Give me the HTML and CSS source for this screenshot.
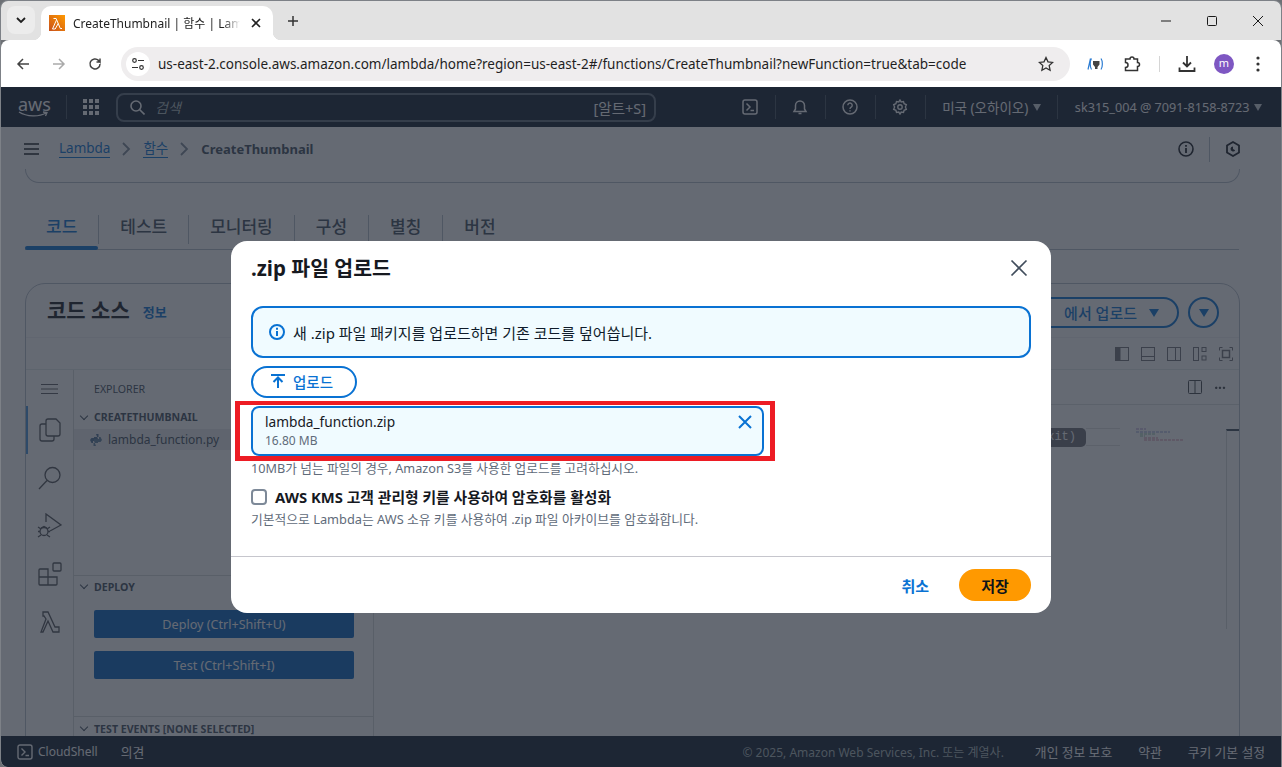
FILE: index.html
```html
<!DOCTYPE html>
<html lang="ko">
<head>
  <meta charset="UTF-8" />
  <meta name="viewport" content="width=device-width, initial-scale=1.0" />
  <title>CreateThumbnail | 함수 | Lambda</title>
  <link rel="stylesheet" href="styles.css">
</head>
<body>
  <div class="window">
    <!-- browser tabs -->
    <div class="tabstrip">
      <div class="tab-search">
        <svg width="12" height="12" viewBox="0 0 12 12"><path d="M2 4l4 4 4-4" fill="none" stroke="#1f1f1f" stroke-width="1.8"/></svg>
      </div>
      <div class="tab">
        <div class="favicon">
          <svg width="16" height="16" viewBox="0 0 16 16"><path d="M4.5 2.5h2.6l4.2 10h1.7M9.2 7.5l-3 5.500H3.500l3.900-8.800" fill="none" stroke="#fff" stroke-width="1"/></svg>
        </div>
        <span class="tab-title">CreateThumbnail | 함수 | Lambda</span>
        <svg class="tab-close" width="10" height="10" viewBox="0 0 10 10"><path d="M1 1l8 8M9 1l-8 8" stroke="#222" stroke-width="1.6"/></svg>
      </div>
      <svg class="new-tab" width="12" height="12" viewBox="0 0 12 12"><path d="M6 1v10M1 6h10" stroke="#333" stroke-width="1.5"/></svg>
      <div class="win-controls">
        <svg width="12" height="12" viewBox="0 0 12 12"><path d="M1 6h10" stroke="#1a1a1a"/></svg>
        <svg width="12" height="12" viewBox="0 0 12 12"><rect x="1.500" y="1.500" width="9" height="9" rx="1" fill="none" stroke="#1a1a1a"/></svg>
        <svg width="12" height="12" viewBox="0 0 12 12"><path d="M1 1l10 10M11 1L1 11" stroke="#1a1a1a"/></svg>
      </div>
    </div>

    <!-- address bar -->
    <div class="toolbar">
      <svg class="tool" width="16" height="16" viewBox="0 0 16 16"><path d="M14 8H3M8 3L3 8l5 5" fill="none" stroke="#444" stroke-width="1.500"/></svg>
      <svg class="tool" width="16" height="16" viewBox="0 0 16 16"><path d="M2 8h11M8 3l5 5-5 5" fill="none" stroke="#aaa" stroke-width="1.500"/></svg>
      <svg class="tool" width="16" height="16" viewBox="0 0 16 16"><path d="M13 8a5 5 0 1 1-1.500-3.600L13 6V2.500M13 6H9.500" fill="none" stroke="#444" stroke-width="1.500"/></svg>
      <div class="omnibox">
        <div class="site-info">
          <svg width="14" height="14" viewBox="0 0 14 14"><g fill="none" stroke="#333" stroke-width="1.200"><circle cx="3.500" cy="3.500" r="1.800"/><path d="M7 3.500h6M1 10.500h6"/><circle cx="10.500" cy="10.500" r="1.800"/></g></svg>
        </div>
        <span class="url">us-east-2.console.aws.amazon.com/lambda/home?region=us-east-2#/functions/CreateThumbnail?newFunction=true&amp;tab=code</span>
        <svg width="16" height="16" viewBox="0 0 16 16"><path d="M8 1.500l2 4.300 4.700.6-3.500 3.200.9 4.700L8 12l-4.100 2.300.9-4.700L1.300 6.400 6 5.800z" fill="none" stroke="#333" stroke-width="1.300"/></svg>
      </div>
      <div class="ext-icons">
        <svg width="18" height="14" viewBox="0 0 18 14"><path d="M3.500 1.500L1 12.500M4.500 1.500C2.800 4 2.800 10 4.500 12.500M14 1.500c1.800 2.500 1.800 8.500 0 11" fill="none" stroke="#2b7cd3" stroke-width="1.200"/><path d="M6 4h6.500v3.500l-2 2.500v2H8v-2l-2-2.500z" fill="#444"/></svg>
        <svg width="18" height="18" viewBox="0 0 18 18"><path d="M2.500 4H7a2 2 0 0 1 4 0h3.500v3.500a2 2 0 0 1 0 4V15.500h-12v-3a2.500 2.500 0 0 0 0-5z" fill="none" stroke="#333" stroke-width="1.500"/></svg>
        <i class="ext-sep"></i>
        <svg width="18" height="18" viewBox="0 0 18 18"><path d="M9 1v10M5 7.500l4 4 4-4M1.500 12.500v3.500h15v-3.500" fill="none" stroke="#333" stroke-width="1.800"/></svg>
        <span class="avatar">m</span>
        <svg class="more" width="4" height="16" viewBox="0 0 4 16"><circle cx="2" cy="2" r="1.600" fill="#333"/><circle cx="2" cy="8" r="1.600" fill="#333"/><circle cx="2" cy="14" r="1.600" fill="#333"/></svg>
      </div>
    </div>

    <div class="console">
      <!-- aws top nav -->
      <header class="topnav">
        <div class="aws-logo">
          <span>aws</span>
          <svg width="31" height="7" viewBox="0 0 31 7"><path d="M1 1c8 5 20 5 27 1M25 1l4 .5-1.500 3.500" fill="none" stroke="#fff" stroke-width="1.300"/></svg>
        </div>
        <i class="nav-sep"></i>
        <svg class="grid-icon" width="16" height="16" viewBox="0 0 16 16" fill="#fff"><rect width="4" height="4"/><rect x="6" width="4" height="4"/><rect x="12" width="4" height="4"/><rect y="6" width="4" height="4"/><rect x="6" y="6" width="4" height="4"/><rect x="12" y="6" width="4" height="4"/><rect y="12" width="4" height="4"/><rect x="6" y="12" width="4" height="4"/><rect x="12" y="12" width="4" height="4"/></svg>
        <div class="search">
          <svg width="15" height="15" viewBox="0 0 15 15"><circle cx="6" cy="6" r="5" fill="none" stroke="#fff" stroke-width="1.600"/><path d="M9.500 9.500L14.500 14.500" stroke="#fff" stroke-width="1.600"/></svg>
          <em>검색</em>
          <span class="shortcut">[알트+S]</span>
        </div>
        <div class="nav-right">
          <svg width="16" height="16" viewBox="0 0 16 16"><rect x="1" y="1" width="14" height="14" rx="2" fill="none" stroke="#fff" stroke-width="1.500"/><path d="M4.500 4.500L8 8l-3.500 3.500M8.500 11.500H12" fill="none" stroke="#fff" stroke-width="1.500"/></svg>
          <i class="nav-sep"></i>
          <svg width="16" height="16" viewBox="0 0 16 16"><path d="M2 12.500h12l-1.500-2.500V6.500a4.500 4.500 0 0 0-9 0V10zM6.500 14.500h3" fill="none" stroke="#fff" stroke-width="1.500"/></svg>
          <i class="nav-sep"></i>
          <svg width="16" height="16" viewBox="0 0 16 16"><circle cx="8" cy="8" r="7" fill="none" stroke="#fff" stroke-width="1.500"/><path d="M5.800 6.200a2.200 2.200 0 1 1 3.400 1.900c-.8.500-1.200 1-1.200 1.900M8 11.200v1.300" fill="none" stroke="#fff" stroke-width="1.400"/></svg>
          <i class="nav-sep"></i>
          <svg width="16" height="16" viewBox="0 0 16 16"><path d="M8 1l1.200 1.900 2.300-.4.600 2.200 2.200 1L13.400 8l.9 2.300-2.200 1-.6 2.200-2.300-.4L8 15l-1.200-1.900-2.300.4-.6-2.200-2.200-1L2.600 8l-.9-2.300 2.200-1 .6-2.200 2.300.4z" fill="none" stroke="#fff" stroke-width="1.400"/><circle cx="8" cy="8" r="2.200" fill="none" stroke="#fff" stroke-width="1.400"/></svg>
          <i class="nav-sep"></i>
          <span class="nav-menu region">미국 (오하이오)</span>
          <i class="caret"></i>
          <i class="nav-sep"></i>
          <span class="nav-menu account">sk315_004 @ 7091-8158-8723</span>
          <i class="caret"></i>
        </div>
      </header>

      <!-- breadcrumb -->
      <div class="crumbs">
        <svg class="burger" width="15" height="12" viewBox="0 0 15 12"><path d="M0 1h15M0 6h15M0 11h15" stroke="#16191f" stroke-width="1.700"/></svg>
        <a class="link">Lambda</a>
        <svg width="9" height="14" viewBox="0 0 9 14"><path d="M1 1l6 6-6 6" fill="none" stroke="#7d8998" stroke-width="1.800"/></svg>
        <a class="link">함수</a>
        <svg width="9" height="14" viewBox="0 0 9 14"><path d="M1 1l6 6-6 6" fill="none" stroke="#7d8998" stroke-width="1.800"/></svg>
        <strong>CreateThumbnail</strong>
        <div class="crumb-right">
          <svg width="16" height="16" viewBox="0 0 16 16"><circle cx="8" cy="8" r="7" fill="none" stroke="#16191f" stroke-width="1.600"/><path d="M8 7v5M8 4v1.800" stroke="#16191f" stroke-width="1.800"/></svg>
          <i class="crumb-sep"></i>
          <svg width="16" height="16" viewBox="0 0 16 16"><path d="M8 1l6 3.500v7L8 15l-6-3.500v-7z" fill="none" stroke="#16191f" stroke-width="1.800"/><path d="M8 5.500a2.500 2.500 0 1 0 2.200 3.700L8 8z" fill="#16191f"/></svg>
        </div>
      </div>

      <main class="content">
        <div class="prev-card"></div>

        <nav class="tabs">
          <span class="page-tab active">코드</span>
          <span class="page-tab">테스트</span>
          <span class="page-tab">모니터링</span>
          <span class="page-tab">구성</span>
          <span class="page-tab">별칭</span>
          <span class="page-tab">버전</span>
        </nav>

        <section class="source-card">
          <div class="card-head">
            <h2>코드 소스</h2>
            <a class="info-link">정보</a>
            <div class="card-actions">
              <span class="pill-btn">에서 업로드 <i class="caret blue"></i></span>
              <span class="round-btn"><i class="caret blue"></i></span>
            </div>
          </div>

          <div class="ide-toolbar">
            <svg width="14" height="14" viewBox="0 0 14 14"><rect x=".5" y=".5" width="13" height="13" fill="none" stroke="#16191f"/><rect x=".5" y=".5" width="5" height="13" fill="#16191f"/></svg>
            <svg width="14" height="14" viewBox="0 0 14 14"><rect x=".5" y=".5" width="13" height="13" fill="none" stroke="#16191f"/><path d="M0 9.500h14" stroke="#16191f"/></svg>
            <svg width="14" height="14" viewBox="0 0 14 14"><rect x=".5" y=".5" width="13" height="13" fill="none" stroke="#16191f"/><path d="M8.500 0v14" stroke="#16191f"/></svg>
            <svg width="14" height="14" viewBox="0 0 14 14" fill="none" stroke="#16191f"><rect x=".5" y=".5" width="5" height="13"/><rect x="9" y=".5" width="4" height="4"/><rect x="9" y="9" width="4" height="4"/></svg>
            <svg width="14" height="14" viewBox="0 0 14 14" fill="none" stroke="#16191f"><rect x="3.500" y="3.500" width="7" height="7" stroke-width="1.500"/><path d="M.5 3.500v-3h3M10.500.5h3v3M13.500 10.500v3h-3M3.500 13.500h-3v-3"/></svg>
          </div>

          <div class="ide">
            <div class="activity">
              <svg class="ide-burger" width="17" height="10" viewBox="0 0 17 10"><path d="M0 .5h17M0 5h17M0 9.500h17" stroke="#16191f"/></svg>
              <div class="act-item active">
                <svg width="22" height="24" viewBox="0 0 22 24" fill="none" stroke="#16191f" stroke-width="1.300"><path d="M9 1h8l4 4v11a2 2 0 0 1-2 2H9a2 2 0 0 1-2-2V3a2 2 0 0 1 2-2z"/><path d="M7 6H3a2 2 0 0 0-2 2v13a2 2 0 0 0 2 2h10a2 2 0 0 0 2-2v-3"/></svg>
              </div>
              <div class="act-item">
                <svg width="24" height="24" viewBox="0 0 24 24" fill="none" stroke="#16191f" stroke-width="1.300"><circle cx="14.500" cy="9" r="7.500"/><path d="M9 14.500L1 23"/></svg>
              </div>
              <div class="act-item">
                <svg width="26" height="26" viewBox="0 0 26 26" fill="none" stroke="#16191f" stroke-width="1.300"><path d="M9 9V1l15 11-11 6"/><circle cx="7" cy="18.500" r="4"/><path d="M4 15l3-1.500 3 1.500M1 14l3 2M1 18.500h2M1 24l3-2M13 14l-3 2M13 18.500h-2M13 24l-3-2"/></svg>
              </div>
              <div class="act-item">
                <svg width="24" height="24" viewBox="0 0 24 24" fill="none" stroke="#16191f" stroke-width="1.300"><path d="M1 8a1 1 0 0 1 1-1h8v16H2a1 1 0 0 1-1-1zM1 15h18M10 15h9v7a1 1 0 0 1-1 1h-8"/><rect x="15" y="1" width="8" height="8" rx="1"/></svg>
              </div>
              <div class="act-item">
                <svg width="20" height="22" viewBox="0 0 20 22" fill="none" stroke="#16191f" stroke-width="1.300"><path d="M3 1h5l7 15h4v5h-6L8 10l-5 11H1l5-13-2-3H3z"/></svg>
              </div>
            </div>

            <div class="sidebar">
              <div class="side-title">EXPLORER</div>
              <div class="tree-head"><i class="chev"></i>CREATETHUMBNAIL</div>
              <div class="tree-file">
                <svg width="12" height="12" viewBox="0 0 12 12"><path d="M6 0h2.500v3H4v1H1.500L0 6l1.500 3H3V7h5V5" fill="#4d6f95"/><path d="M6 12H3.500V9H8V8h2.500L12 6l-1.500-3H9v2H4v2" fill="#5e7f9f"/></svg>
                lambda_function.py
              </div>
              <div class="side-spacer"></div>
              <div class="panel-head deploy"><i class="chev"></i>DEPLOY</div>
              <div class="side-btns">
                <button type="button">Deploy (Ctrl+Shift+U)</button>
                <button type="button">Test (Ctrl+Shift+I)</button>
              </div>
              <div class="panel-head"><i class="chev"></i>TEST EVENTS [NONE SELECTED]</div>
            </div>

            <div class="editor">
              <div class="editor-tabs">
                <svg width="14" height="14" viewBox="0 0 14 14" fill="none" stroke="#16191f"><rect x=".5" y=".5" width="13" height="13" rx="1"/><path d="M7 0v14"/></svg>
                <span class="dots">···</span>
              </div>
              <div class="editor-body">
                <span class="hint-pill">(Ctrl+Q to exit)</span>
                <span class="hint-line"></span>
                <svg class="minimap" width="50" height="14" viewBox="0 0 50 14" fill="none" stroke-width=".6" stroke-dasharray="3 1"><path d="M1 1h10" stroke="#7a4fb0"/><path d="M1 4h34" stroke="#4a5fc0"/><path d="M5 6h16M5 8h5" stroke="#3f9a6a"/><path d="M9 10h14M9 12h40" stroke="#c04070"/></svg>
                <span class="scroll-mark"></span>
              </div>
            </div>
          </div>
        </section>
      </main>

      <footer class="foot">
        <svg width="16" height="16" viewBox="0 0 16 16"><rect x="1" y="1" width="14" height="14" rx="2" fill="none" stroke="#fff" stroke-width="1.400"/><path d="M4.500 4.500L8 8l-3.500 3.500M8.500 11.500H12" fill="none" stroke="#fff" stroke-width="1.400"/></svg>
        <span class="foot-shell">CloudShell</span>
        <span class="foot-link">의견</span>
        <div class="foot-right">
          <span class="copy">© 2025, Amazon Web Services, Inc. 또는 계열사.</span>
          <span class="foot-link">개인 정보 보호</span>
          <span class="foot-link">약관</span>
          <span class="foot-link">쿠키 기본 설정</span>
        </div>
      </footer>

      <!-- upload dialog -->
      <div class="overlay">
        <div class="modal">
          <div class="modal-head">
            <h1>.zip 파일 업로드</h1>
            <svg width="18" height="18" viewBox="0 0 18 18"><path d="M1.500 1.500l15 15M16.500 1.500l-15 15" stroke="#414d5c" stroke-width="1.700"/></svg>
          </div>
          <div class="modal-body">
            <div class="alert">
              <svg width="16" height="16" viewBox="0 0 16 16"><circle cx="8" cy="8" r="7" fill="none" stroke="#0972d3" stroke-width="2"/><path d="M8 7v5M8 3.800v2" stroke="#0972d3" stroke-width="2"/></svg>
              <span>새 .zip 파일 패키지를 업로드하면 기존 코드를 덮어씁니다.</span>
            </div>
            <button type="button" class="upload-btn">
              <svg width="16" height="16" viewBox="0 0 16 16"><path d="M1 2h14M8 15V5M3.500 9L8 4.500 12.500 9" fill="none" stroke="#0972d3" stroke-width="2"/></svg>
              업로드
            </button>
            <div class="file-token">
              <div>
                <div class="file-name">lambda_function.zip</div>
                <div class="file-size">16.80 MB</div>
              </div>
              <svg width="14" height="14" viewBox="0 0 14 14"><path d="M1 1l12 12M13 1L1 13" stroke="#0972d3" stroke-width="2"/></svg>
              <div class="highlight"></div>
            </div>
            <p class="hint">10MB가 넘는 파일의 경우, Amazon S3를 사용한 업로드를 고려하십시오.</p>
            <label class="check">
              <span class="box"></span>
              AWS KMS 고객 관리형 키를 사용하여 암호화를 활성화
            </label>
            <p class="check-note">기본적으로 Lambda는 AWS 소유 키를 사용하여 .zip 파일 아카이브를 암호화합니다.</p>
          </div>
          <div class="modal-foot">
            <a class="cancel">취소</a>
            <button type="button" class="save">저장</button>
          </div>
        </div>
      </div>
    </div>
  </div>
</body>
</html>
```

FILE: styles.css
```css
* {
  box-sizing: border-box;
}

body {
  margin: 0;
  background: #6d7075;
  font-family: 'Noto Sans', 'Noto Sans CJK KR', sans-serif;
  color: #16191f;
}

.window {
  width: 1282px;
  height: 767px;
  display: flex;
  flex-direction: column;
  overflow: hidden;
  border: 1px solid #7d8187;
  border-bottom: none;
  border-radius: 8px 8px 0 8px;
}

/* browser chrome */
.tabstrip {
  height: 39px;
  flex: none;
  display: flex;
  align-items: flex-end;
  background: #e2e2e2;
  padding-left: 6px;
}

.tab-search {
  width: 28px;
  height: 28px;
  margin-bottom: 6px;
  border-radius: 8px;
  background: #ececec;
  display: flex;
  align-items: center;
  justify-content: center;
}

.tab {
  position: relative;
  width: 232px;
  height: 34px;
  margin-left: 6px;
  padding: 0 9px 0 8px;
  display: flex;
  align-items: center;
  gap: 8px;
  background: #fff;
  border-radius: 10px 10px 0 0;
}

.tab::before,
.tab::after {
  content: "";
  position: absolute;
  bottom: 0;
  width: 8px;
  height: 8px;
}

.tab::before {
  left: -8px;
  background: radial-gradient(circle at 0 0, transparent 8px, #fff 8.5px);
}

.tab::after {
  right: -8px;
  background: radial-gradient(circle at 100% 0, transparent 8px, #fff 8.5px);
}

.favicon {
  width: 16px;
  height: 16px;
  flex: none;
  background: linear-gradient(45deg, #c8511b, #ff9900);
}

.tab-title {
  width: 167px;
  flex: none;
  font-size: 12px;
  color: #222;
  white-space: nowrap;
  overflow: hidden;
  -webkit-mask-image: linear-gradient(to right, #000 90%, transparent);
  mask-image: linear-gradient(to right, #000 90%, transparent);
}

.tab-close {
  margin-left: 3px;
  flex: none;
}

.new-tab {
  margin: 0 0 13px 14px;
}

.win-controls {
  margin-left: auto;
  margin-bottom: 13px;
  padding-right: 17px;
  display: flex;
  gap: 34px;
}

.toolbar {
  height: 47px;
  flex: none;
  display: flex;
  align-items: center;
  background: #fff;
  padding-left: 14px;
  border-radius: 8px 8px 0 0;
}

.tool {
  margin-right: 20px;
  flex: none;
}

.omnibox {
  width: 949px;
  height: 34px;
  flex: none;
  margin-left: -2px;
  padding: 0 16px 0 5px;
  display: flex;
  align-items: center;
  background: #efedee;
  border-radius: 17px;
}

.site-info {
  width: 24px;
  height: 24px;
  flex: none;
  display: flex;
  align-items: center;
  justify-content: center;
  background: #fff;
  border-radius: 50%;
}

.url {
  flex: 1;
  margin-left: 8px;
  font-size: 13.5px;
  color: #1f1f1f;
  white-space: nowrap;
  overflow: hidden;
}

.ext-icons {
  flex: 1;
  display: flex;
  align-items: center;
  padding-left: 17px;
  gap: 18px;
}

.ext-sep {
  width: 1px;
  height: 16px;
  background: #d5d5d5;
}

.avatar {
  width: 20px;
  height: 20px;
  border-radius: 50%;
  background: #7e57c2;
  color: #fff;
  font-size: 11px;
  line-height: 18px;
  text-align: center;
}

.more {
  margin-left: 4px;
}

/* console */
.console {
  position: relative;
  flex: 1;
  min-height: 0;
  display: flex;
  flex-direction: column;
  background: #fff;
}

.topnav {
  height: 40px;
  flex: none;
  display: flex;
  align-items: center;
  padding: 0 19px 0 17px;
  background: #0f1b2d;
  color: #fff;
  font-size: 12.65px;
}

.aws-logo {
  width: 31px;
  display: flex;
  flex-direction: column;
  font-size: 18px;
  line-height: 14px;
  text-align: center;
}

.nav-sep {
  width: 1px;
  height: 24px;
  background: #414d5c;
  flex: none;
}

.topnav > .nav-sep {
  margin: 0 16px 0 17px;
}

.grid-icon {
  flex: none;
}

.search {
  width: 540px;
  height: 29px;
  margin-left: 17px;
  padding: 0 8px 0 12px;
  display: flex;
  align-items: center;
  border: 2px solid #5f6b7a;
  border-radius: 8px;
  font-size: 14px;
}

.search em {
  margin-left: 10px;
  color: #aab7b8;
}

.shortcut {
  margin-left: auto;
  font-size: 14.5px;
}

.nav-right {
  margin-left: auto;
  display: flex;
  align-items: center;
  gap: 16.5px;
}

.nav-right .caret {
  margin-left: -12px;
}

.region {
  font-size: 13.5px;
}

.caret {
  width: 0;
  height: 0;
  display: inline-block;
  border-left: 4px solid transparent;
  border-right: 4px solid transparent;
  border-top: 7px solid #d1d5db;
}

.caret.blue {
  border-left-width: 5px;
  border-right-width: 5px;
  border-top-width: 8px;
  border-top-color: #0972d3;
}

.crumbs {
  height: 42px;
  flex: none;
  display: flex;
  align-items: center;
  padding: 2px 40px 0 23px;
  font-size: 13.5px;
  background: #fff;
  gap: 12px;
}

.burger {
  margin-right: 8px;
}

.link {
  color: #0972d3;
  border-bottom: 1px solid #0972d3;
  line-height: 17px;
}

.crumbs strong {
  font-size: 13px;
  color: #414d5c;
}

.crumb-right {
  margin-left: auto;
  display: flex;
  align-items: center;
  gap: 15px;
}

.crumb-sep {
  width: 1px;
  height: 25px;
  background: #b6bec9;
}

.content {
  flex: 1;
  min-height: 0;
  overflow: hidden;
  padding: 0 41px 0 24px;
}

.prev-card {
  height: 14px;
  border: 1px solid #b6bec9;
  border-top: none;
  border-radius: 0 0 20px 20px;
}

.tabs {
  height: 40px;
  margin-top: 27px;
  margin-right: 1px;
  display: flex;
  align-items: flex-start;
  padding-top: 5px;
  border-bottom: 1px solid #b6bec9;
}

.page-tab {
  position: relative;
  height: 29px;
  padding: 0 21px;
  font-size: 17px;
  font-weight: 500;
  line-height: 24px;
  color: #414d5c;
  border-right: 1px solid #b6bec9;
}

.page-tab:last-child {
  border-right: none;
}

.page-tab.active {
  color: #0972d3;
}

.page-tab.active::after {
  content: "";
  position: absolute;
  left: 0;
  right: 0;
  bottom: -6px;
  height: 4px;
  background: #0972d3;
  border-radius: 2px;
}

.source-card {
  height: 500px;
  margin-top: 33px;
  border: 1px solid #b6bec9;
  border-radius: 20px 20px 0 0;
}

.card-head {
  height: 53px;
  padding: 12px 20px 0 21px;
  display: flex;
  align-items: flex-start;
}

.card-head h2 {
  margin: 0;
  font-size: 21px;
  line-height: 28px;
}

.info-link {
  margin: 8px 0 0 13px;
  font-size: 13px;
  font-weight: 700;
  line-height: 16px;
  color: #0972d3;
}

.card-actions {
  margin-left: auto;
  margin-top: 1px;
  display: flex;
  gap: 9px;
}

.pill-btn {
  width: 180px;
  height: 31px;
  padding-right: 18px;
  display: flex;
  align-items: center;
  justify-content: flex-end;
  gap: 12px;
  border: 2px solid #0972d3;
  border-radius: 16px;
  font-size: 15px;
  font-weight: 500;
  color: #0972d3;
}

.round-btn {
  width: 31px;
  height: 31px;
  display: flex;
  align-items: center;
  justify-content: center;
  border: 2px solid #0972d3;
  border-radius: 50%;
}

.ide-toolbar {
  height: 33px;
  padding-right: 6px;
  display: flex;
  align-items: center;
  justify-content: flex-end;
  gap: 12px;
  opacity: .6;
  border-top: 1px solid #e9ebed;
  border-bottom: 1px solid #d5dbdb;
}

.ide {
  display: flex;
  height: 400px;
}

.activity {
  width: 48px;
  flex: none;
  border-right: 1px solid #d5dbdb;
}

.ide-burger {
  display: block;
  margin: 14px 0 12px 15px;
  opacity: .7;
}

.act-item {
  height: 48px;
  display: flex;
  align-items: center;
  justify-content: center;
  opacity: .75;
}

.act-item.active {
  border-left: 2px solid #0972d3;
  padding-right: 2px;
}

.sidebar {
  width: 300px;
  flex: none;
  border-right: 1px solid #d5dbdb;
  font-size: 10.6px;
  color: #414d5c;
}

.side-title {
  height: 35px;
  padding-left: 20px;
  line-height: 39px;
}

.tree-head {
  height: 24px;
  padding-left: 20px;
  display: flex;
  align-items: center;
  font-weight: 700;
  position: relative;
}

.chev {
  position: absolute;
  left: 7px;
  width: 6px;
  height: 6px;
  border-right: 1px solid #414d5c;
  border-bottom: 1px solid #414d5c;
  transform: rotate(45deg);
  margin-top: -3px;
}

.tree-file {
  height: 21px;
  padding-left: 16px;
  display: flex;
  align-items: center;
  gap: 6px;
  font-size: 12px;
  background: #e9ebed;
}

.side-spacer {
  height: 125px;
}

.panel-head {
  position: relative;
  height: 24px;
  padding-left: 20px;
  display: flex;
  align-items: center;
  font-weight: 700;
  border-top: 1px solid #d5dbdb;
}

.panel-head.deploy {
  padding-bottom: 2px;
}

.side-btns {
  height: 117px;
  padding: 11px 19px 0 20px;
  display: flex;
  flex-direction: column;
  gap: 13px;
}

.side-btns button {
  height: 28px;
  border: none;
  border-radius: 2px;
  background: #0561c0;
  color: #fff;
  font-family: inherit;
  font-size: 12.6px;
}

.editor {
  flex: 1;
  min-width: 0;
}

.editor-tabs {
  height: 35px;
  padding-right: 13px;
  display: flex;
  align-items: center;
  justify-content: flex-end;
  gap: 12px;
  border-bottom: 1px solid #d5dbdb;
  opacity: .8;
}

.dots {
  font-size: 14px;
  font-weight: 700;
}

.editor-body {
  display: flex;
  align-items: flex-start;
  justify-content: flex-end;
  padding: 23px 0 0;
}

.hint-pill {
  height: 19px;
  padding: 0 10px 0 6px;
  background: #6e6e76;
  border-radius: 5px;
  color: #fff;
  font-family: 'Liberation Mono', monospace;
  font-size: 12px;
  line-height: 18px;
}

.hint-line {
  width: 34px;
  height: 18px;
  border-top: 1px solid #e0e0e0;
  border-bottom: 1px solid #e0e0e0;
}

.minimap {
  margin: 0 41px 0 15px;
  flex: none;
}

.scroll-mark {
  width: 13px;
  height: 200px;
  flex: none;
  margin-top: 1px;
  border-left: 1px solid #d5dbdb;
  border-top: 2px solid #414d5c;
}

.foot {
  height: 31px;
  flex: none;
  display: flex;
  align-items: center;
  padding: 0 16px 0 16px;
  background: #0f1b2d;
  color: #fff;
  font-size: 12px;
}

.foot-shell {
  margin: 0 23px 0 5px;
}

.foot-link {
  font-size: 12.8px;
}

.foot-right {
  margin-left: auto;
  display: flex;
  align-items: center;
  gap: 26px;
}

.copy {
  margin-right: 5px;
  color: #aab7b8;
}

/* dialog */
.overlay {
  position: absolute;
  inset: 0;
  display: flex;
  align-items: center;
  justify-content: center;
  background: rgba(35, 43, 55, 0.7);
  border-radius: 0 0 0 8px;
}

.modal {
  width: 820px;
  height: 372px;
  display: flex;
  flex-direction: column;
  background: #fff;
  border-radius: 16px;
}

.modal-head {
  height: 65px;
  flex: none;
  padding: 0 23px 12px 20px;
  display: flex;
  align-items: center;
  justify-content: space-between;
}

.modal-head h1 {
  margin: 0;
  font-size: 20.5px;
  line-height: 26px;
}

.modal-body {
  flex: 1;
  padding: 0 20px;
}

.alert {
  height: 52px;
  padding: 0 16px;
  display: flex;
  align-items: center;
  gap: 8px;
  background: #f0fbff;
  border: 2px solid #0972d3;
  border-radius: 12px;
  font-size: 15px;
  color: #0f1b2a;
}

.upload-btn {
  height: 32px;
  width: 106px;
  margin-top: 8px;
  padding: 0 0 2px 17px;
  display: flex;
  align-items: center;
  gap: 7px;
  background: #fff;
  border: 2px solid #0972d3;
  border-radius: 16px;
  color: #0972d3;
  font-family: inherit;
  font-size: 14.5px;
  font-weight: 500;
}

.file-token {
  position: relative;
  width: 513px;
  height: 50px;
  margin-top: 8px;
  padding: 0 10px 0 12px;
  display: flex;
  align-items: flex-start;
  justify-content: space-between;
  background: #f0fbff;
  border: 2px solid #0972d3;
  border-radius: 8px;
}

.file-token svg {
  margin-top: 7px;
}

.file-name {
  margin-top: 4px;
  font-size: 13.7px;
  line-height: 20px;
}

.file-size {
  font-size: 12px;
  line-height: 18px;
  color: #5f6b7a;
}

.highlight {
  position: absolute;
  left: -18px;
  top: -7px;
  width: 540px;
  height: 60px;
  border: 5px solid #ed1c24;
  border-top-width: 4px;
  pointer-events: none;
}

.hint {
  margin: 4px 0 0;
  font-size: 12.7px;
  line-height: 16px;
  color: #5f6b7a;
}

.check {
  margin-top: 11px;
  display: flex;
  align-items: center;
  gap: 8px;
  font-size: 14.8px;
  font-weight: 700;
  line-height: 20px;
}

.box {
  width: 16px;
  height: 16px;
  border: 2px solid #7d8998;
  border-radius: 4px;
}

.check-note {
  margin: 4px 0 0;
  font-size: 12.8px;
  line-height: 16px;
  color: #5f6b7a;
}

.modal-foot {
  height: 57px;
  flex: none;
  padding: 0 20px;
  display: flex;
  align-items: center;
  justify-content: flex-end;
  gap: 30px;
  border-top: 1px solid #c6c6cd;
}

.cancel {
  font-size: 15px;
  font-weight: 700;
  color: #0972d3;
}

.save {
  width: 72px;
  height: 32px;
  border: none;
  border-radius: 16px;
  background: #ff9900;
  color: #0f141a;
  font-family: inherit;
  font-size: 15px;
  font-weight: 700;
}
```
